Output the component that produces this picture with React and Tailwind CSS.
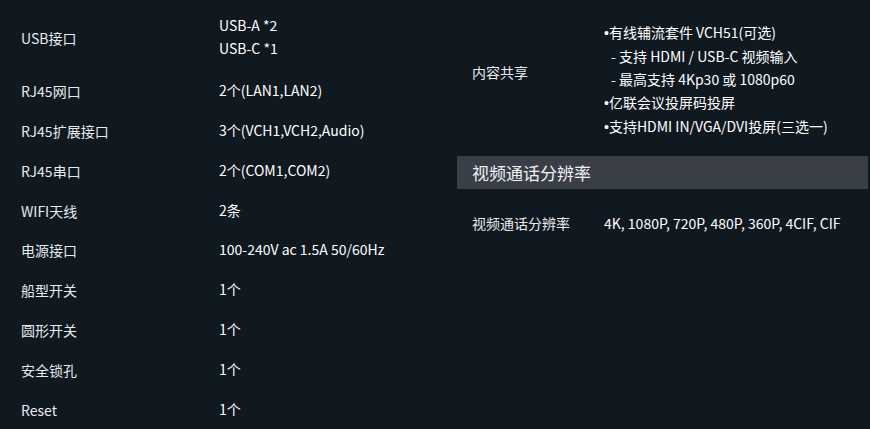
import React from 'react';

const leftRows = [
  { label: 'USB接口', values: ['USB-A *2', 'USB-C *1'], tall: true },
  { label: 'RJ45网口', values: ['2个(LAN1,LAN2)'] },
  { label: 'RJ45扩展接口', values: ['3个(VCH1,VCH2,Audio)'] },
  { label: 'RJ45串口', values: ['2个(COM1,COM2)'] },
  { label: 'WIFI天线', values: ['2条'] },
  { label: '电源接口', values: ['100-240V ac 1.5A 50/60Hz'] },
  { label: '船型开关', values: ['1个'] },
  { label: '圆形开关', values: ['1个'] },
  { label: '安全锁孔', values: ['1个'] },
  { label: 'Reset', values: ['1个'] },
];

// bullet: true -> small dot, false -> indented dash line
const shareLines = [
  { bullet: true, text: '有线辅流套件 VCH51(可选)' },
  { bullet: false, text: '- 支持 HDMI / USB-C 视频输入' },
  { bullet: false, text: '- 最高支持 4Kp30 或 1080p60' },
  { bullet: true, text: '亿联会议投屏码投屏' },
  { bullet: true, text: '支持HDMI IN/VGA/DVI投屏(三选一)' },
];

export default function App() {
  return (
    <div
      className="w-[870px] h-[429px] overflow-hidden bg-[#101820] text-[#e8eaed] text-[14px] leading-[23px] flex"
      style={{ fontFamily: '"Noto Sans CJK SC", "Noto Sans", sans-serif' }}
    >
      {/* left spec table */}
      <div className="w-[457px] pl-[21px] pt-[4px] flex flex-col">
        {leftRows.map((row) => (
          <div
            key={row.label}
            className={`flex items-center ${row.tall ? 'h-[67px]' : 'h-[40px]'}`}
          >
            <div className="w-[198px] mt-[2px]">{row.label}</div>
            <div className="flex flex-col text-white">
              {row.values.map((v) => (
                <span key={v}>{v}</span>
              ))}
            </div>
          </div>
        ))}
      </div>

      {/* right column */}
      <div className="w-[411px] flex flex-col">
        <div className="flex pt-[21px] pl-[15px] h-[156px]">
          <div className="w-[132px] pt-[40px]">内容共享</div>
          <div className="flex flex-col text-white">
            {shareLines.map((l) =>
              l.bullet ? (
                <span key={l.text}>
                  <span style={{ fontFamily: '"Liberation Sans", sans-serif' }}>•</span>
                  {l.text}
                </span>
              ) : (
                <span key={l.text} className="pl-[7px]">{l.text}</span>
              )
            )}
          </div>
        </div>
        <div className="h-[33px] bg-[#3a3f47] pl-[15px] flex items-center text-[17px] text-[#eef0f2]">
          视频通话分辨率
        </div>
        <div className="flex items-center pl-[15px] pt-[23px]">
          <div className="w-[132px]">视频通话分辨率</div>
          <div className="text-white">4K, 1080P, 720P, 480P, 360P, 4CIF, CIF</div>
        </div>
      </div>
    </div>
  );
}
